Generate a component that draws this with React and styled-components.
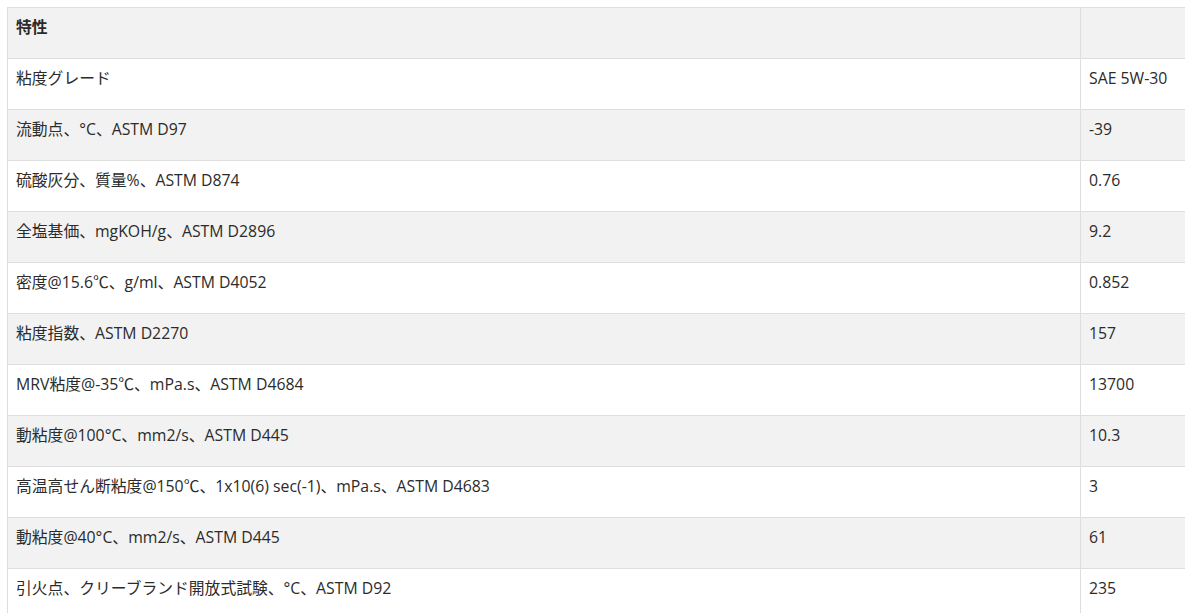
import React from "react";
import styled, { createGlobalStyle } from "styled-components";

const GlobalStyle = createGlobalStyle`
  body {
    margin: 7px 0 0 7px;
    background: #fff;
    font-family: "Open Sans", "Noto Sans CJK JP", sans-serif;
    overflow: hidden;
  }
`;

const Table = styled.table`
  border-collapse: collapse;
  width: 1220px;
  table-layout: fixed;
  color: #2b2b2b;
  font-size: 15.8px;
`;

const Row = styled.tr`
  background: ${(p) => (p.$shaded ? "#f2f2f2" : "#fff")};
`;

const Cell = styled.td`
  border: 1px solid #dedede;
  height: 51px;
  box-sizing: border-box;
  padding: 9px 8px 0 8px;
  vertical-align: top;
  line-height: 20px;
  white-space: nowrap;
  font-weight: ${(p) => (p.$head ? 700 : 400)};
`;

const rows = [
  ["粘度グレード", "SAE 5W-30"],
  ["流動点、°C、ASTM D97", "-39"],
  ["硫酸灰分、質量%、ASTM D874", "0.76"],
  ["全塩基価、mgKOH/g、ASTM D2896", "9.2"],
  ["密度@15.6℃、g/ml、ASTM D4052", "0.852"],
  ["粘度指数、ASTM D2270", "157"],
  ["MRV粘度@-35℃、mPa.s、ASTM D4684", "13700"],
  ["動粘度@100°C、mm2/s、ASTM D445", "10.3"],
  ["高温高せん断粘度@150℃、1x10(6) sec(-1)、mPa.s、ASTM D4683", "3"],
  ["動粘度@40°C、mm2/s、ASTM D445", "61"],
  ["引火点、クリーブランド開放式試験、°C、ASTM D92", "235"],
];

export default function App() {
  return (
    <>
      <GlobalStyle />
      <Table>
        <colgroup>
          <col style={{ width: 1073 }} />
          <col />
        </colgroup>
        <tbody>
          <Row $shaded>
            <Cell $head>特性</Cell>
            <Cell />
          </Row>
          {rows.map(([k, v], i) => (
            <Row key={k} $shaded={i % 2 === 1}>
              <Cell>{k}</Cell>
              <Cell>{v}</Cell>
            </Row>
          ))}
        </tbody>
      </Table>
    </>
  );
}
